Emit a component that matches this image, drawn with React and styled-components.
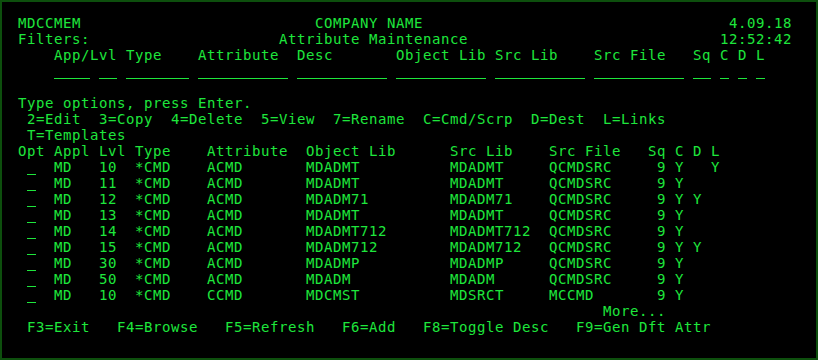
import React from 'react';
import styled, { createGlobalStyle } from 'styled-components';

const GlobalStyle = createGlobalStyle`
  html, body {
    margin: 0;
    padding: 0;
    background: #000;
  }
`;

const Screen = styled.div`
  box-sizing: border-box;
  width: 818px;
  height: 360px;
  background: #000;
  border: 2px solid #0d4f0d;
  padding: 13px 0 0 16px;
  color: #1ee63c;
  font-family: "DejaVu Sans Mono", "Liberation Mono", monospace;
  font-size: 14px;
  letter-spacing: 0.57px;
  overflow: hidden;
`;

const Line = styled.div`
  height: 16px;
  line-height: 16px;
  white-space: pre;
`;

// input field shown as a solid underline, one column = 9px
const Field = styled.span`
  display: inline-block;
  vertical-align: top;
  box-sizing: border-box;
  width: ${props => props.$len * 9}px;
  height: 16px;
  border-bottom: 1px solid #1ee63c;
`;

// place text pieces at fixed screen columns
const at = (parts) => {
  let s = '';
  parts.forEach(([col, text]) => {
    if (s.length < col) s += ' '.repeat(col - s.length);
    s += text;
  });
  return s;
};

const rows = [
  ['MD', '10', '*CMD', 'ACMD', 'MDADMT', 'MDADMT', 'QCMDSRC', '9', 'Y', '', 'Y'],
  ['MD', '11', '*CMD', 'ACMD', 'MDADMT', 'MDADMT', 'QCMDSRC', '9', 'Y', '', ''],
  ['MD', '12', '*CMD', 'ACMD', 'MDADM71', 'MDADM71', 'QCMDSRC', '9', 'Y', 'Y', ''],
  ['MD', '13', '*CMD', 'ACMD', 'MDADMT', 'MDADMT', 'QCMDSRC', '9', 'Y', '', ''],
  ['MD', '14', '*CMD', 'ACMD', 'MDADMT712', 'MDADMT712', 'QCMDSRC', '9', 'Y', '', ''],
  ['MD', '15', '*CMD', 'ACMD', 'MDADM712', 'MDADM712', 'QCMDSRC', '9', 'Y', 'Y', ''],
  ['MD', '30', '*CMD', 'ACMD', 'MDADMP', 'MDADMP', 'QCMDSRC', '9', 'Y', '', ''],
  ['MD', '50', '*CMD', 'ACMD', 'MDADM', 'MDADM', 'QCMDSRC', '9', 'Y', '', ''],
  ['MD', '10', '*CMD', 'CCMD', 'MDCMST', 'MDSRCT', 'MCCMD', '9', 'Y', '', ''],
];

const lines = [
  at([[0, 'MDCCMEM'], [33, 'COMPANY NAME'], [79, '4.09.18']]),
  at([[0, 'Filters:'], [29, 'Attribute Maintenance'], [78, '12:52:42']]),
  at([[4, 'App/Lvl'], [12, 'Type'], [20, 'Attribute'], [31, 'Desc'], [42, 'Object Lib'],
      [53, 'Src Lib'], [64, 'Src File'], [75, 'Sq'], [78, 'C'], [80, 'D'], [82, 'L']]),
  at([[4, '____'], [9, '__'], [12, '_______'], [20, '__________'], [31, '__________'],
      [42, '__________'], [53, '__________'], [64, '__________'], [75, '__'], [78, '_'],
      [80, '_'], [82, '_']]),
  '',
  'Type options, press Enter.',
  at([[1, '2=Edit'], [9, '3=Copy'], [17, '4=Delete'], [27, '5=View'], [35, '7=Rename'],
      [45, 'C=Cmd/Scrp'], [57, 'D=Dest'], [65, 'L=Links']]),
  at([[1, 'T=Templates']]),
  at([[0, 'Opt'], [4, 'Appl'], [9, 'Lvl'], [13, 'Type'], [21, 'Attribute'], [32, 'Object Lib'],
      [48, 'Src Lib'], [59, 'Src File'], [70, 'Sq'], [73, 'C'], [75, 'D'], [77, 'L']]),
  ...rows.map((r) =>
    at([[1, '_'], [4, r[0]], [9, r[1]], [13, r[2]], [21, r[3]], [32, r[4]], [48, r[5]],
        [59, r[6]], [71, r[7]], [73, r[8]], [75, r[9]], [77, r[10]]])
  ),
  at([[65, 'More...']]),
  at([[1, 'F3=Exit'], [11, 'F4=Browse'], [23, 'F5=Refresh'], [36, 'F6=Add'],
      [45, 'F8=Toggle Desc'], [62, 'F9=Gen Dft Attr']]),
];

// runs of underscores become input fields, the rest stays text
const renderLine = (text) =>
  text.split(/(_+)/).map((part, i) =>
    /^_+$/.test(part) ? <Field key={i} $len={part.length} /> : part
  );

const App = () => {
  return <Screen>
    <GlobalStyle />
    {lines.map((text, i) => <Line key={i}>{renderLine(text)}</Line>)}
  </Screen>;
};

export default App;
